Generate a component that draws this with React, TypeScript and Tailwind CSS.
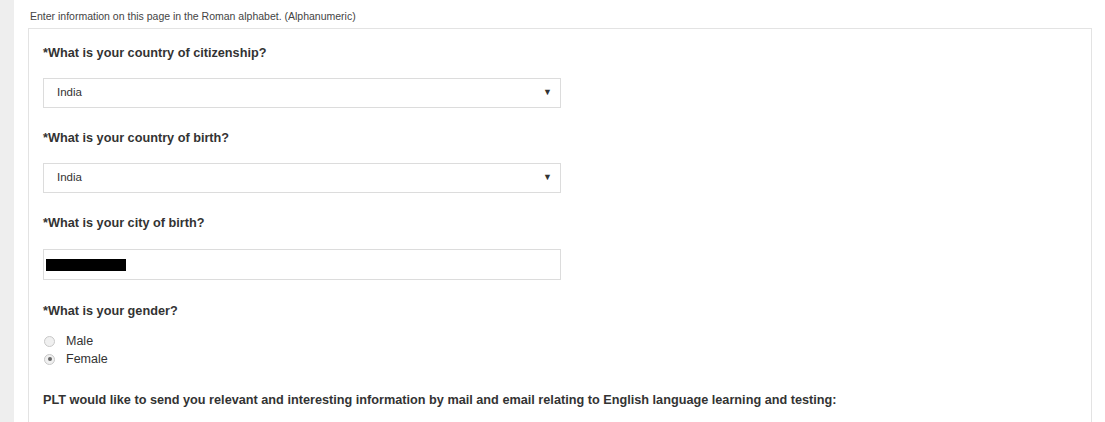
import { useState } from "react"

const Label = ({ text }: { text: string }) => (
  <div className="h-4 leading-4 text-[12.7px] font-bold text-[#333] whitespace-nowrap">*{text}</div>
)

const SelectBox = ({ value }: { value: string }) => (
  <div className="mt-[17px] flex items-center justify-between w-[518px] h-[30px] border border-[#dcdcdc] pl-[13px] pr-[8px] text-[11.5px] text-[#333]">
    <span>{value}</span>
    <span className="text-[9px] text-[#333]">▼</span>
  </div>
)

export default function App() {
  const [gender, setGender] = useState("Female")

  return (
    <div className="flex w-[1105px] h-[422px] overflow-hidden bg-white" style={{ fontFamily: '"Liberation Sans", Arial, sans-serif' }}>
      <div id="sideStrip" className="w-[14px] shrink-0 bg-[#eeeeee]"></div>
      <div id="content" className="flex flex-col pl-[14px] pt-[8px]">
        <div className="pl-[2px] h-4 leading-4 text-[10.5px] text-[#444] whitespace-nowrap">
          Enter information on this page in the Roman alphabet. (Alphanumeric)
        </div>
        <div id="formPanel" className="mt-[4px] w-[1064px] h-[460px] shrink-0 border border-[#e3e3e3] pl-[14px] pt-[16px]">
          <Label text="What is your country of citizenship?" />
          <SelectBox value="India" />

          <div className="mt-[22px]">
            <Label text="What is your country of birth?" />
          </div>
          <SelectBox value="India" />

          <div className="mt-[22px]">
            <Label text="What is your city of birth?" />
          </div>
          <div className="mt-[18px] flex items-center w-[518px] h-[31px] border border-[#dcdcdc] pl-[2px]">
            <div className="w-[80px] h-[12px] bg-black"></div>
          </div>

          <div className="mt-[23px]">
            <Label text="What is your gender?" />
          </div>
          <div className="mt-[13px] flex flex-col">
            {["Male", "Female"].map((g) => (
              <div key={g} className="flex items-center h-[18px] cursor-pointer" onClick={() => setGender(g)}>
                <div className="ml-[1px] flex items-center justify-center w-[11px] h-[11px] rounded-full border border-[#c8c8c8] bg-[#f0f0f0]">
                  {gender === g && <div className="w-[4px] h-[4px] rounded-full bg-[#666]"></div>}
                </div>
                <span className="ml-[11px] text-[12.5px] text-[#333]">{g}</span>
              </div>
            ))}
          </div>

          <div className="mt-[24px] h-4 leading-4 text-[12.7px] font-bold text-[#333] whitespace-nowrap">
            PLT would like to send you relevant and interesting information by mail and email relating to English language learning and testing:
          </div>
        </div>
      </div>
    </div>
  )
}
